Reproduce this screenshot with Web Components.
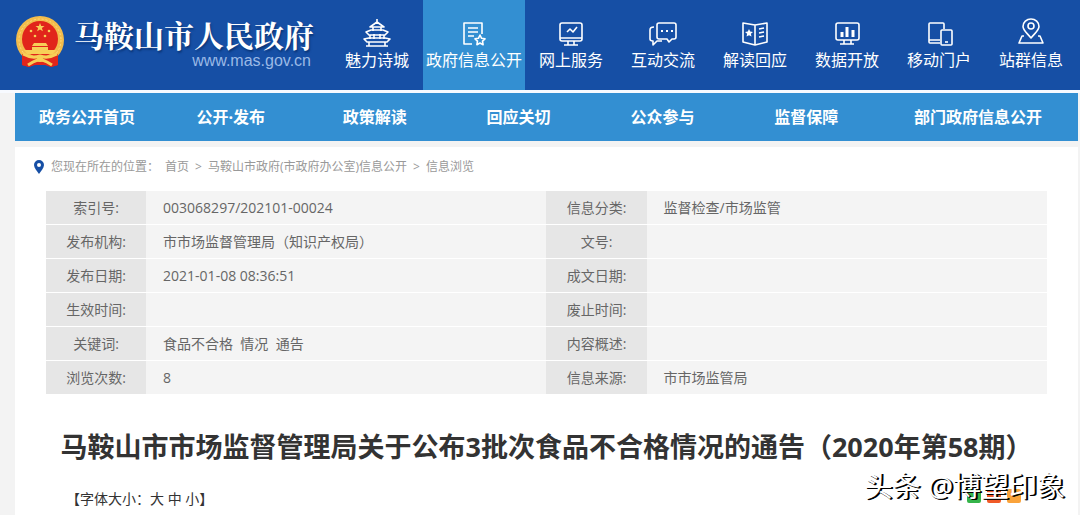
<!DOCTYPE html>
<html lang="zh-CN">
<head>
<meta charset="utf-8">
<meta name="viewport" content="width=device-width, initial-scale=1">
<title>马鞍山市人民政府</title>
<style>
    body {
        margin: 0;
        min-height: 100vh;
        background: #f3f3f3;
        color: #666;
        font: 14px/20px "Open Sans", "Noto Sans CJK SC", sans-serif;
        overflow-x: hidden;
    }
</style>
</head>
<body>
<gov-page></gov-page>

<script>
const icons = {
    tower: '<path d="M15 1v4M8 9l7-5 7 5zM11 9v4M19 9v4M4 14l5-2h12l5 2-3 3H7zM8 17v4M22 17v4M12 16v5M18 16v5M2 21l5-1h16l5 1-3 3H5zM4 28h22M7 24v4M23 24v4"/>',
    doc: '<path d="M13 26H5V5h18v11M9 10h10M9 14h10M9 18h6"/><path d="M21 17l1.6 3.3 3.4.5-2.5 2.4.6 3.5-3.1-1.7-3.1 1.7.6-3.5-2.5-2.4 3.4-.5z"/>',
    screen: '<rect x="4" y="5" width="22" height="18" rx="2"/><path d="M11 14l3-3 3 3 4-5M4 20h22M12 23v4M18 23v4M8 27h14"/>',
    chat: '<rect x="9" y="5" width="19" height="16" rx="2" stroke="none"/><path d="M11 5h15q2 0 2 2v12q0 2-2 2h-2l-3 3-2-3h-8q-2 0-2-2V7q0-2 2-2zM6 9q-4 0-4 3v9q0 2 3 2v4l4-4h5"/><path stroke-width="2" d="M13 13h2M18 13h2M23 13h2"/>',
    book: '<path d="M15 7L3 5v19l12 3 12-3V5zM15 7v20M19 11l5-1M19 15l5-1M19 19l5-1"/><path fill="currentColor" stroke="none" d="M9 11l1.2 2.6 2.8.3-2.1 1.9.6 2.8L9 17.200l-2.500 1.400.6-2.800-2.100-1.900 2.800-.3z"/>',
    chart: '<rect x="4" y="5" width="23" height="17" rx="2"/><path stroke-width="3" d="M10 19v-5M15 19V9M21 19v-7"/><path d="M12 22v4M19 22v4M8 26h14"/>',
    device: '<path d="M16 25H6q-1 0-1-1V6q0-1 1-1h13q1 0 1 1v5M5 22h11"/><rect x="17" y="12" width="11" height="15" rx="1"/><path d="M21 24h3"/>',
    place: '<path d="M15 20c-5-6-8-8-8-11.500a8 7.500 0 0 1 16 0c0 3.500-3 5.500-8 11.500z"/><circle cx="15" cy="8" r="3"/><path d="M8 18H6L3 25h24l-3-7h-2"/>'
};

function define(name, markup, setup) {
    customElements.define(name, class extends HTMLElement {
        connectedCallback() {
            if (this.shadowRoot) return;
            this.attachShadow({ mode: 'open' });
            this.shadowRoot.innerHTML = markup;
            if (setup) setup(this, this.shadowRoot);
        }
    });
}

define('state-emblem', `
    <style>
        :host { display: block; flex: none; }
        svg { display: block; width: 50px; height: 54px; }
    </style>
    <svg viewBox="0 0 50 54" aria-hidden="true">
        <path fill="#e1251b" d="M7 35h36v15l-7 2-6-2H20l-6 2-7-2z"/>
        <circle cx="25" cy="25" r="24" fill="#f3bc4c"/>
        <circle cx="25" cy="25" r="21" fill="none" stroke="#ffdc7c" stroke-width="1" stroke-dasharray="2 2"/>
        <circle cx="25" cy="24" r="18" fill="#e1251b"/>
        <path fill="#f7cf57" d="M25 8l1.200 3 3.300.1-2.600 2 1 3.200-2.900-1.900-2.900 1.900 1-3.200-2.600-2 3.300-.1z"/>
        <g fill="#f7cf57"><circle cx="16" cy="16" r="1.300"/><circle cx="34" cy="16" r="1.300"/><circle cx="20" cy="21" r="1.300"/><circle cx="30" cy="21" r="1.300"/></g>
        <path fill="#f7cf57" d="M19 28h12l2 3H17zM17 32h16v3h8l-3 4H12l-3-4h8z"/>
        <path fill="#e1251b" d="M7 39l10 2 8-2 8 2 10-2v11l-7 2-6-3H20l-6 3-7-2z"/>
        <path fill="none" stroke="#f7cf57" stroke-width="3" d="M8 39q9 5 17 2q8 3 17-2M13 50l5-3q7-4 14 0l5 3"/>
        <circle cx="25" cy="44" r="3" fill="#f7cf57"/>
    </svg>
`);

define('site-brand', `
    <style>
        :host { display: block; flex: none; }
        a { display: flex; gap: 9px; color: #fff; text-decoration: none; }
        .names { display: flex; flex-direction: column; }
        strong {
            font: bold 30px/38px "Noto Serif CJK SC", "Noto Sans CJK SC", serif;
            text-shadow: 1px 2px 2px #0b3678;
        }
        .url {
            align-self: flex-end;
            padding-right: 3px;
            color: #9ab9e6;
            font: 16px/16px "Liberation Sans", sans-serif;
        }
    </style>
    <a href="#">
        <state-emblem></state-emblem>
        <span class="names"><strong>马鞍山市人民政府</strong><span class="url">www.mas.gov.cn</span></span>
    </a>
`);

define('top-link', `
    <style>
        :host { display: block; flex: none; }
        a {
            display: flex;
            flex-direction: column;
            align-items: center;
            box-sizing: border-box;
            min-width: 92px;
            height: 90px;
            padding: 18px 3px 0;
            color: #fff;
            font-size: 16px;
            line-height: 24px;
            text-decoration: none;
            white-space: nowrap;
        }
        :host([active]) a { background: #338fd2; }
        svg {
            width: 30px;
            height: 30px;
            fill: none;
            stroke: currentColor;
            stroke-width: 1.6;
            stroke-linejoin: round;
        }
    </style>
    <a href="#"><svg viewBox="0 0 30 30" aria-hidden="true"></svg><slot></slot></a>
`, (host, root) => {
    root.querySelector('svg').innerHTML = icons[host.getAttribute('icon')];
});

define('site-header', `
    <style>
        :host { display: block; background: #164fa5; border-bottom: 3px solid #f7faff; }
        header { display: flex; justify-content: space-between; padding: 0 3px 0 15px; }
        site-brand { padding-top: 15px; }
        nav { display: flex; }
    </style>
    <header>
        <site-brand></site-brand>
        <nav aria-label="网站导航">
            <top-link icon="tower">魅力诗城</top-link>
            <top-link icon="doc" active>政府信息公开</top-link>
            <top-link icon="screen">网上服务</top-link>
            <top-link icon="chat">互动交流</top-link>
            <top-link icon="book">解读回应</top-link>
            <top-link icon="chart">数据开放</top-link>
            <top-link icon="device">移动门户</top-link>
            <top-link icon="place">站群信息</top-link>
        </nav>
    </header>
`);

define('section-nav', `
    <style>
        :host { display: block; background: #338fd2; }
        nav { display: grid; grid-template-columns: repeat(6, 18fr) 25fr; }
        a {
            padding: 12px 0;
            color: #fff;
            font-size: 16px;
            font-weight: bold;
            line-height: 24px;
            text-align: center;
            text-decoration: none;
            white-space: nowrap;
        }
    </style>
    <nav aria-label="政务公开">
        <a href="#">政务公开首页</a>
        <a href="#">公开·发布</a>
        <a href="#">政策解读</a>
        <a href="#">回应关切</a>
        <a href="#">公众参与</a>
        <a href="#">监督保障</a>
        <a href="#">部门政府信息公开</a>
    </nav>
`);

define('bread-crumb', `
    <style>
        :host { display: block; padding: 10px 18px 14px; color: #999; font-size: 12px; }
        nav { display: flex; align-items: center; gap: 6px; }
        svg { width: 12px; height: 16px; }
        a { color: inherit; text-decoration: none; }
    </style>
    <nav aria-label="当前位置">
        <svg viewBox="0 0 12 16" aria-hidden="true"><path fill="#164fa5" fill-rule="evenodd" d="M6 1a5 5 0 0 0-5 5c0 3 3 6 5 9 2-3 5-6 5-9a5 5 0 0 0-5-5zm0 3a2 2 0 1 1 0 4 2 2 0 0 1 0-4z"/></svg>
        <span>您现在所在的位置：</span>
        <a href="#">首页</a><span>&gt;</span>
        <a href="#">马鞍山市政府(市政府办公室)信息公开</a><span>&gt;</span>
        <a href="#">信息浏览</a>
    </nav>
`);

define('info-table', `
    <style>
        :host { display: block; margin: 0 31px; }
        table { width: 100%; border-collapse: collapse; table-layout: fixed; }
        th, td { height: 33px; padding: 0; border-bottom: 1px solid #fff; }
        th { width: 10%; background: #e6e6e6; font-weight: normal; text-align: center; }
        td { width: 40%; padding-left: 17px; box-sizing: border-box; background: #f4f4f4; white-space: pre; }
    </style>
    <table>
        <tr><th scope="row">索引号:</th><td>003068297/202101-00024</td><th scope="row">信息分类:</th><td>监督检查/市场监管</td></tr>
        <tr><th scope="row">发布机构:</th><td>市市场监督管理局（知识产权局）</td><th scope="row">文号:</th><td></td></tr>
        <tr><th scope="row">发布日期:</th><td>2021-01-08 08:36:51</td><th scope="row">成文日期:</th><td></td></tr>
        <tr><th scope="row">生效时间:</th><td></td><th scope="row">废止时间:</th><td></td></tr>
        <tr><th scope="row">关键词:</th><td>食品不合格  情况  通告</td><th scope="row">内容概述:</th><td></td></tr>
        <tr><th scope="row">浏览次数:</th><td>8</td><th scope="row">信息来源:</th><td>市市场监管局</td></tr>
    </table>
`);

define('share-tools', `
    <style>
        :host { display: flex; gap: 6px; }
        button { width: 14px; height: 14px; padding: 0; border: 0; border-radius: 2px; }
        .wechat { background: #35b44a; }
        .weibo { background: #f05a28; }
        .qzone { background: #faa33b; }
    </style>
    <button class="wechat" aria-label="微信"></button>
    <button class="weibo" aria-label="微博"></button>
    <button class="qzone" aria-label="QQ空间"></button>
`);

define('article-head', `
    <style>
        :host { display: block; padding: 32px 31px 0; color: #333; }
        h1 { margin: 0; font-size: 27px; line-height: 40px; text-align: center; white-space: nowrap; }
        .tools { display: flex; justify-content: space-between; padding: 22px 26px 6px 20px; }
        button { padding: 0; border: 0; background: none; color: inherit; font: inherit; }
    </style>
    <h1>马鞍山市市场监督管理局关于公布3批次食品不合格情况的通告（2020年第58期）</h1>
    <div class="tools">
        <span>【字体大小：<button>大</button> <button>中</button> <button>小</button>】</span>
        <share-tools></share-tools>
    </div>
`);

define('author-mark', `
    <style>
        :host {
            position: absolute;
            right: 15px;
            bottom: 9px;
            color: #fff;
            font-size: 28px;
            line-height: 40px;
            text-shadow: 1px 1px 0 #000, 2px 1px 0 #000;
            white-space: nowrap;
            pointer-events: none;
        }
    </style>
    <slot></slot>
`);

define('gov-page', `
    <style>
        :host { display: block; position: relative; min-height: 100vh; }
        .wrap { margin: 0 2px 0 15px; }
        main { margin-top: 6px; background: #fff; }
    </style>
    <site-header></site-header>
    <div class="wrap">
        <section-nav></section-nav>
        <main>
            <bread-crumb></bread-crumb>
            <info-table></info-table>
            <article-head></article-head>
        </main>
    </div>
    <author-mark>头条 @博望印象</author-mark>
`);
</script>
</body>
</html>
